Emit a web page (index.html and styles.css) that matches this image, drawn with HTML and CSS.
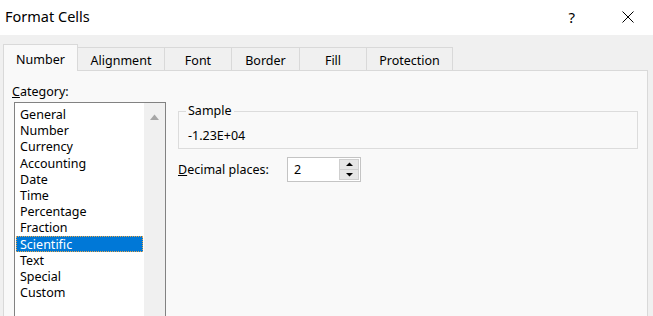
FILE: index.html
```html
<!DOCTYPE html>
<html lang="en">
<head>
  <meta charset="UTF-8" />
  <title>Format Cells</title>
  <link rel="stylesheet" href="styles.css">
</head>
<body>

  <div class="dialog">
    <div class="titlebar">
      <span class="title">Format Cells</span>
      <div class="title-buttons">
        <span class="help">?</span>
        <svg class="close" width="12" height="12" viewBox="0 0 12 12">
          <path d="M0.5 0.5 L11.5 11.5 M11.5 0.5 L0.5 11.5" stroke="#000" stroke-width="1" fill="none"/>
        </svg>
      </div>
    </div>

    <div class="content">
      <!-- Tabs -->
      <div class="tabs">
        <div class="tab active">Number</div>
        <div class="tab">Alignment</div>
        <div class="tab">Font</div>
        <div class="tab">Border</div>
        <div class="tab">Fill</div>
        <div class="tab">Protection</div>
      </div>

      <div class="panel">
        <div class="category">
          <div class="label"><u>C</u>ategory:</div>
          <div class="listbox">
            <ul class="items">
              <li>General</li>
              <li>Number</li>
              <li>Currency</li>
              <li>Accounting</li>
              <li>Date</li>
              <li>Time</li>
              <li>Percentage</li>
              <li>Fraction</li>
              <li class="selected">Scientific</li>
              <li>Text</li>
              <li>Special</li>
              <li>Custom</li>
            </ul>
            <div class="scrollbar">
              <svg width="9" height="6" viewBox="0 0 9 6">
                <path d="M0 6 L4.5 0.5 L9 6 Z" fill="#a6a6a6"/>
              </svg>
            </div>
          </div>
        </div>

        <div class="options">
          <fieldset class="sample">
            <legend>Sample</legend>
            <div class="sample-value">-1.23E+04</div>
          </fieldset>

          <div class="decimals">
            <span class="label"><u>D</u>ecimal places:</span>
            <div class="spin">
              <span class="spin-value">2</span>
              <div class="spin-buttons">
                <div class="spin-btn">
                  <svg width="7" height="5" viewBox="0 0 7 5"><path d="M0 4 L3.5 0.5 L7 4 Z" fill="#000"/></svg>
                </div>
                <div class="spin-btn">
                  <svg width="7" height="5" viewBox="0 0 7 5"><path d="M0 1 L3.5 4.5 L7 1 Z" fill="#000"/></svg>
                </div>
              </div>
            </div>
          </div>
        </div>
      </div>
    </div>
  </div>

</body>
</html>
```

FILE: styles.css
```css
* {
  box-sizing: border-box;
}

body {
  margin: 0;
  width: 653px;
  height: 316px;
  overflow: hidden;
  font-family: "Noto Sans", "Open Sans", sans-serif;
  font-size: 12.5px;
  color: #000;
  background-color: #f0f0f0;
}

.titlebar {
  height: 35px;
  background-color: #fff;
  display: flex;
  align-items: center;
  justify-content: space-between;
  padding: 0 19px 0 5px;
}

.title {
  font-size: 14.5px;
  margin-top: -3px;
}

.title-buttons {
  display: flex;
  align-items: center;
  gap: 47px;
  margin-top: -2px;
}

.help {
  font-size: 15px;
}

.content {
  padding: 9px 5px 0 3px;
}

/* Tabs */
.tabs {
  display: flex;
  align-items: flex-end;
  height: 26px;
  position: relative;
  z-index: 1;
}

.tab {
  height: 23px;
  line-height: 16px;
  padding-top: 5px;
  text-align: center;
  border: 1px solid #d9d9d9;
  border-bottom: none;
  border-left: none;
  background-color: #f0f0f0;
}

.tab:nth-child(2) { width: 87px; }
.tab:nth-child(3) { width: 67px; }
.tab:nth-child(4) { width: 68px; }
.tab:nth-child(5) { width: 67px; }
.tab:nth-child(6) { width: 86px; }

.tab.active {
  width: 75px;
  height: 27px;
  padding-top: 7px;
  border-left: 1px solid #d9d9d9;
  background-color: #f9f9f9;
  margin-bottom: -1px;
}

.panel {
  display: flex;
  height: 246px;
  border: 1px solid #d9d9d9;
  border-bottom: none;
  background-color: #f9f9f9;
  padding: 13px 0 0 10px;
}

/* Category list */
.category {
  width: 152px;
  display: flex;
  flex-direction: column;
}

.label {
  line-height: 16px;
}

.category .label {
  margin-left: -2px;
  margin-bottom: 2px;
}

.listbox {
  flex: 1;
  display: flex;
  border: 1px solid #828282;
  border-bottom: none;
  background-color: #fff;
}

.items {
  list-style: none;
  margin: 0;
  padding: 3px 1px 0 1px;
  flex: 1;
}

.items li {
  height: 16.2px;
  line-height: 16px;
  padding-left: 3px;
  border: 1px solid transparent;
}

.items li.selected {
  background-color: #0078d7;
  color: #fff;
  border: 1px dotted #e8a74a;
}

.scrollbar {
  width: 21px;
  background-color: #f0f0f0;
  display: flex;
  justify-content: center;
  padding-top: 11px;
}

/* Right side */
.options {
  flex: 1;
  padding: 19px 9px 0 12px;
}

.sample {
  margin: 0;
  height: 46px;
  border: 1px solid #dcdcdc;
  padding: 0 0 0 7px;
}

.sample legend {
  padding: 0 2px;
  line-height: 16px;
}

.sample-value {
  padding-left: 2px;
  margin-top: 9px;
  line-height: 16px;
}

.decimals {
  display: flex;
  align-items: center;
  margin-top: 8px;
}

.decimals .label {
  width: 109px;
}

.spin {
  width: 74px;
  height: 25px;
  border: 1px solid #c4c4c4;
  background-color: #fff;
  display: flex;
  align-items: center;
  justify-content: space-between;
  padding: 1px;
}

.spin-value {
  padding-left: 5px;
  line-height: 16px;
}

.spin-buttons {
  width: 20px;
  height: 100%;
  display: flex;
  flex-direction: column;
  gap: 1px;
  border: 1px solid #cfcfcf;
  background-color: #cfcfcf;
}

.spin-btn {
  flex: 1;
  background-color: #e6e6e6;
  display: flex;
  align-items: center;
  justify-content: center;
}
```
